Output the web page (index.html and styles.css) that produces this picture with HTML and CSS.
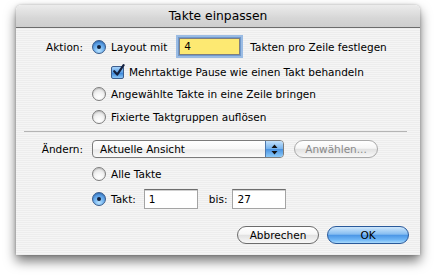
FILE: index.html
```html
<!DOCTYPE html>
<html lang="de">
<head>
<meta charset="utf-8">
<title>Takte einpassen</title>
<link rel="stylesheet" href="styles.css">
</head>
<body>
<div class="window">
  <div class="titlebar">Takte einpassen</div>
  <div class="content">
    <div class="row r1">
      <span class="label">Aktion:</span>
      <span class="radio on"></span>
      <span class="text">Layout mit</span>
      <span class="field focus">4</span>
      <span class="text after">Takten pro Zeile festlegen</span>
    </div>
    <div class="row r2 indent">
      <span class="check"><svg width="15" height="15" viewBox="0 0 15 15"><path d="M3.2 7.2 L6.2 10.6 L12.6 1.2" fill="none" stroke="#14213f" stroke-width="2.2" stroke-linecap="round" stroke-linejoin="round"/></svg></span>
      <span class="text">Mehrtaktige Pause wie einen Takt behandeln</span>
    </div>
    <div class="row r3 radio-row">
      <span class="radio"></span>
      <span class="text">Angewählte Takte in eine Zeile bringen</span>
    </div>
    <div class="row r4 radio-row">
      <span class="radio"></span>
      <span class="text">Fixierte Taktgruppen auflösen</span>
    </div>
    <div class="separator"></div>
    <div class="row r5">
      <span class="label">Ändern:</span>
      <span class="popup">
        <span class="popup-text">Aktuelle Ansicht</span>
        <span class="popup-arrows"><svg width="7" height="11" viewBox="0 0 7 11"><path d="M3.5 0.5 L6.5 4 L0.5 4 Z M3.5 10.5 L6.5 7 L0.5 7 Z" fill="#111"/></svg></span>
      </span>
      <span class="btn disabled">Anwählen...</span>
    </div>
    <div class="row r6 radio-row">
      <span class="radio"></span>
      <span class="text">Alle Takte</span>
    </div>
    <div class="row r7 radio-row">
      <span class="radio on"></span>
      <span class="text">Takt:</span>
      <span class="field f1">1</span>
      <span class="text bis">bis:</span>
      <span class="field f2">27</span>
    </div>
    <div class="row buttons">
      <span class="btn cancel">Abbrechen</span>
      <span class="btn ok">OK</span>
    </div>
  </div>
</div>
</body>
</html>
```

FILE: styles.css
```css
html, body {
  margin: 0;
  padding: 0;
  background: #ffffff;
}
body {
  font-family: "DejaVu Sans", "Liberation Sans", sans-serif;
  font-size: 10.5px;
  color: #000;
  width: 438px;
  height: 277px;
  overflow: hidden;
}
.window {
  margin: 5px 0 0 16px;
  width: 404px;
  height: 250px;
  border-radius: 5px 5px 0 0;
  box-shadow: 0 6px 12px rgba(0, 0, 0, 0.55), 0 0 3px rgba(0, 0, 0, 0.25);
  display: flex;
  flex-direction: column;
  overflow: hidden;
}
.titlebar {
  height: 22px;
  line-height: 23px;
  flex: none;
  text-align: center;
  font-size: 12.3px;
  background: linear-gradient(#ececec, #d6d6d6 60%, #cecece);
  border-bottom: 1px solid #6c6c6c;
  border-radius: 5px 5px 0 0;
}
.content {
  flex: 1;
  background: repeating-linear-gradient(to bottom, #ededed 0, #ededed 1px, #f5f5f5 1px, #f5f5f5 2px);
  padding: 8px 0 0 0;
  display: flex;
  flex-direction: column;
}
.row {
  display: flex;
  align-items: center;
  white-space: nowrap;
}
.label {
  width: 67px;
  text-align: right;
  margin-right: 9px;
  flex: none;
}
.radio-row { padding-left: 76px; }
.indent { padding-left: 95px; }
.r1 { height: 21px; }
.r2 { height: 16px; margin-top: 7px; }
.r3 { height: 16px; margin-top: 6px; }
.r4 { height: 16px; margin-top: 7px; }
.separator {
  height: 1px;
  background: #b4b4b4;
  margin: 6px 13px 0 8px;
}
.r5 { height: 18px; margin-top: 8px; }
.r6 { height: 16px; margin-top: 8px; }
.r7 { height: 20px; margin-top: 7px; }
.buttons {
  height: 18px;
  margin-top: 17px;
  justify-content: flex-end;
  padding-right: 11px;
  gap: 8px;
}

.radio {
  width: 14px;
  height: 14px;
  box-sizing: border-box;
  border-radius: 50%;
  border: 1px solid #7d7d7d;
  background: radial-gradient(circle at 50% 75%, #ffffff 0, #f4f4f4 40%, #d2d2d2 100%);
  box-shadow: inset 0 1px 1px rgba(0,0,0,0.15);
  margin-right: 5px;
  flex: none;
  position: relative;
}
.radio.on {
  border-color: #375a8a;
  background: radial-gradient(circle at 50% 80%, #b8e2ff 0, #6eb0ee 45%, #2c72c9 100%);
}
.radio.on::after {
  content: "";
  position: absolute;
  left: 4px;
  top: 4px;
  width: 4px;
  height: 4px;
  border-radius: 50%;
  background: #13203a;
}
.check {
  width: 13px;
  height: 13px;
  box-sizing: border-box;
  border: 1px solid #3d5e8e;
  border-radius: 2px;
  background: linear-gradient(#a9d4fa, #5b9fe6 50%, #3a86da 55%, #8ec8f8);
  margin-right: 5px;
  position: relative;
  flex: none;
}
.check svg {
  position: absolute;
  left: -1px;
  top: -3px;
}
.field {
  box-sizing: border-box;
  height: 20px;
  background: #fff;
  border: 1px solid #a4a4a4;
  border-top-color: #6e6e6e;
  box-shadow: inset 0 1px 0 #d0d0d0;
  padding-left: 4px;
  line-height: 18px;
  flex: none;
}
.field.focus {
  width: 61px;
  height: 17px;
  line-height: 15px;
  margin-left: 12px;
  background: #fde972;
  border-color: #7f7f7f;
  box-shadow: 0 0 0 1px #6f98cc, 0 0 0 3px rgba(139, 178, 224, 0.85);
  padding-left: 4px;
}
.after { margin-left: 10px; }
.f1 { width: 54px; margin-left: 8px; }
.bis { margin-left: 11px; margin-right: 5px; }
.f2 { width: 54px; }

.popup {
  box-sizing: border-box;
  width: 192px;
  height: 18px;
  border: 1px solid #7b7b7b;
  border-radius: 4px;
  background: linear-gradient(#ffffff, #f7f7f7 50%, #e9e9e9 55%, #fbfbfb);
  display: flex;
  align-items: stretch;
  overflow: hidden;
  flex: none;
}
.popup-text {
  flex: 1;
  padding-left: 7px;
  line-height: 16px;
}
.popup-arrows {
  width: 17px;
  border-left: 1px solid #4f79ad;
  background: linear-gradient(#c3e1fb, #78b4ee 48%, #4a93e2 52%, #8ccaf8);
  display: flex;
  align-items: center;
  justify-content: center;
}
.btn {
  box-sizing: border-box;
  height: 18px;
  border-radius: 9px;
  border: 1px solid #6c6c6c;
  background: linear-gradient(#ffffff, #f6f6f6 45%, #e2e2e2 52%, #f8f8f8 100%);
  display: flex;
  align-items: center;
  justify-content: center;
  flex: none;
}
.btn.disabled {
  width: 84px;
  margin-left: 10px;
  color: #8a8a8a;
  border-color: #a9a9a9;
}
.cancel { width: 82px; }
.ok {
  width: 82px;
  border-color: #29599a;
  background: linear-gradient(#cfe7fc, #86bdf1 45%, #4c97e6 52%, #6fb6f6 80%, #a9dafc 100%);
}
```
